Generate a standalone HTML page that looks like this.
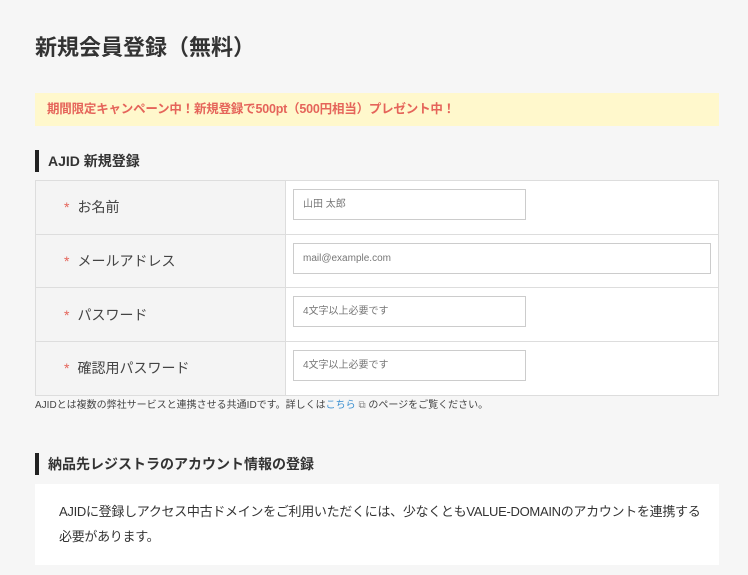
<!DOCTYPE html>
<html><head><meta charset="utf-8"><style>
*{margin:0;padding:0;box-sizing:border-box}
body{width:748px;height:575px;overflow:hidden;background:#f6f6f6;font-family:"Liberation Sans","Noto Sans CJK JP",sans-serif;color:#333;position:relative}
.a{position:absolute}
h1{position:absolute;left:35px;top:33px;font-size:22px;font-weight:bold;color:#333;line-height:30px}
.ban{left:35px;top:93px;width:684px;height:33px;background:#fff8cc;color:#e5645a;font-size:12.5px;font-weight:bold;line-height:33px;padding-left:12px;letter-spacing:-0.2px}
.sh{left:35px;width:400px;height:22px;border-left:4px solid #222;padding-left:9px;font-size:14px;font-weight:bold;line-height:22px;color:#333}
table{position:absolute;left:35px;top:180px;width:684px;border-collapse:collapse;background:#fff}
td{border:1px solid #ddd;height:53.7px;font-size:14px}
td.l{width:250px;background:#f4f4f4;padding-left:28px;color:#444}
td.l span{color:#e5645a;margin-right:8px}
td.r{padding-left:7px;vertical-align:top;padding-top:8px}
.in{height:31px;border:1px solid #ccc;background:#fff;font-size:10px;color:#777;line-height:29px;padding-left:9px;width:233px}
.note{left:35px;top:399px;font-size:10px;color:#444;line-height:14px}
.box{left:35px;top:484px;width:684px;height:81px;background:#fff;padding:15px 24px;font-size:13px;line-height:25px;color:#333;letter-spacing:-0.3px;white-space:nowrap}
</style></head><body>
<h1>新規会員登録（無料）</h1>
<div class="a ban">期間限定キャンペーン中！新規登録で500pt（500円相当）プレゼント中！</div>
<div class="a sh" style="top:150px">AJID 新規登録</div>
<table>
<tr><td class="l"><span>*</span>お名前</td><td class="r"><div class="in">山田 太郎</div></td></tr>
<tr><td class="l"><span>*</span>メールアドレス</td><td class="r"><div class="in" style="width:418px">mail@example.com</div></td></tr>
<tr><td class="l"><span>*</span>パスワード</td><td class="r"><div class="in">4文字以上必要です</div></td></tr>
<tr><td class="l"><span>*</span>確認用パスワード</td><td class="r"><div class="in">4文字以上必要です</div></td></tr>
</table>
<div class="a note">AJIDとは複数の弊社サービスと連携させる共通IDです。詳しくは<span style="color:#3a8fd0">こちら</span> <span style="color:#888">⧉</span> のページをご覧ください。</div>
<div class="a sh" style="top:453px">納品先レジストラのアカウント情報の登録</div>
<div class="a box">AJIDに登録しアクセス中古ドメインをご利用いただくには、少なくともVALUE-DOMAINのアカウントを連携する<br>必要があります。</div>
</body></html>
